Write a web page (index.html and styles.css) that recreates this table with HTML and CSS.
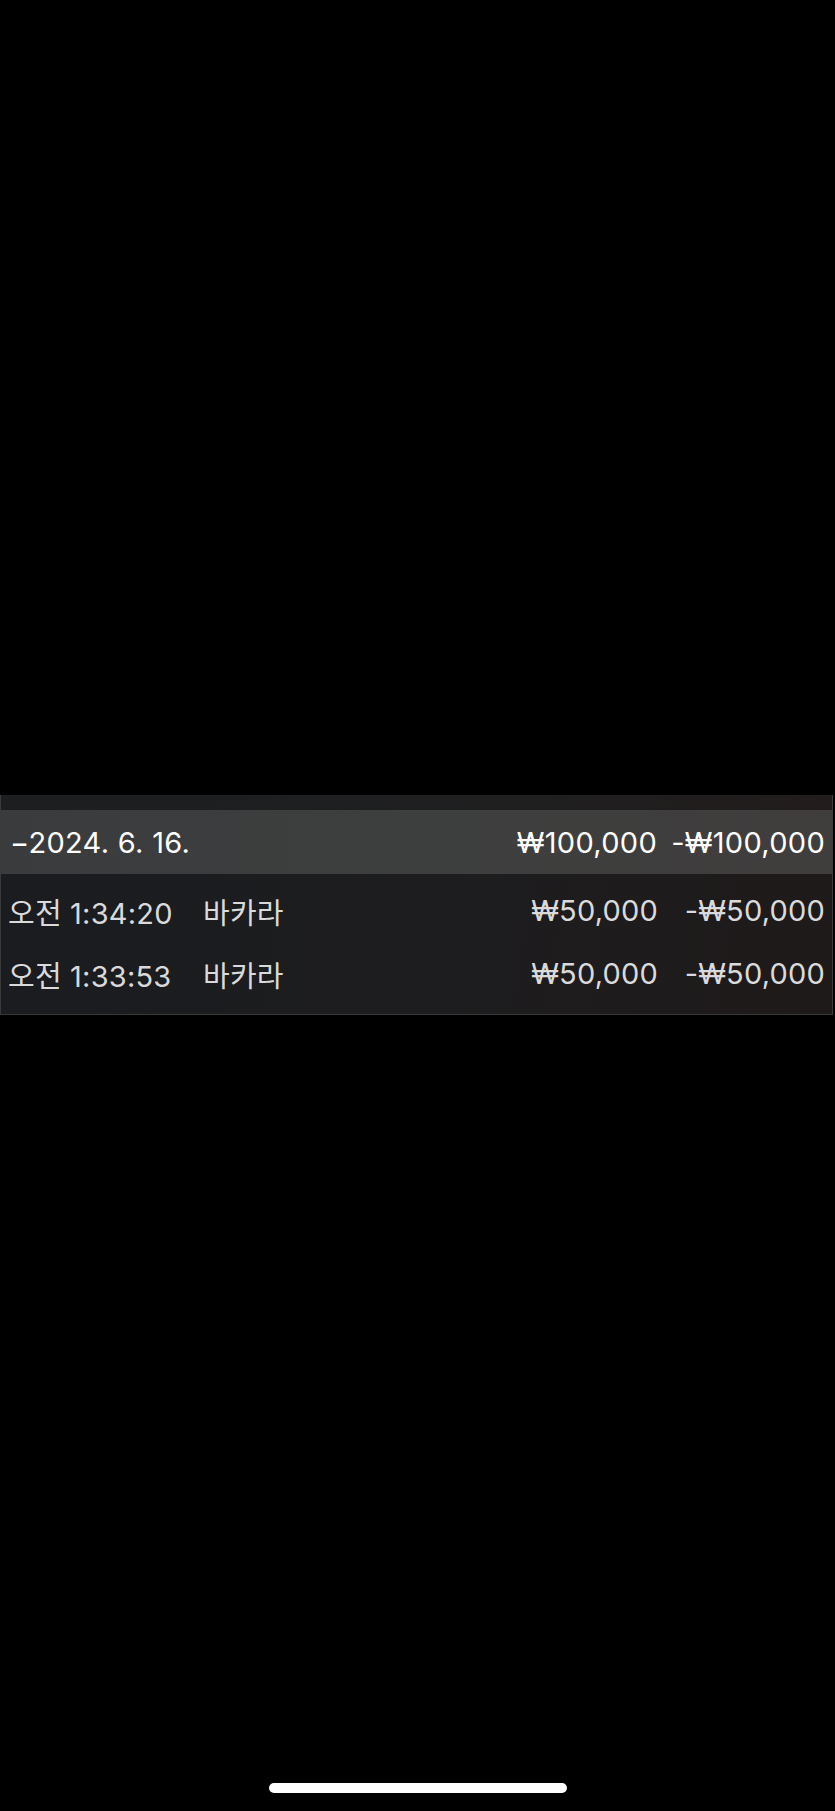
FILE: index.html
```html
<!DOCTYPE html>
<html lang="ko">
<head>
<meta charset="utf-8">
<link rel="stylesheet" href="styles.css">
</head>
<body>
<div class="screen">
  <div class="panel">
    <div class="strip"></div>
    <div class="header">
      <div class="date">−2024. 6. 16.</div>
      <div class="amt">₩100,000</div>
      <div class="total">-₩100,000</div>
    </div>
    <div class="rows">
      <div class="row">
        <div class="time">오전 1:34:20</div>
        <div class="name">바카라</div>
        <div class="amt">₩50,000</div>
        <div class="total">-₩50,000</div>
      </div>
      <div class="row">
        <div class="time">오전 1:33:53</div>
        <div class="name">바카라</div>
        <div class="amt">₩50,000</div>
        <div class="total">-₩50,000</div>
      </div>
    </div>
  </div>
  <div class="home"></div>
</div>
</body>
</html>
```

FILE: styles.css
```css
html, body {
  margin: 0;
  padding: 0;
  background: #000;
}
.screen {
  width: 835px;
  height: 1811px;
  display: flex;
  flex-direction: column;
  font-family: Inter, "Noto Sans CJK KR", sans-serif;
}
.panel {
  margin-top: 795px;
  width: 833px;
  border: 1px solid #3a3a3a;
  border-top: none;
  box-sizing: border-box;
  background: linear-gradient(100deg, #1a1c1f 0%, #1d1d1f 50%, #1f1a1a 100%);
}
.strip {
  height: 15px;
  background: linear-gradient(90deg, #1c1e20 0%, #1f1f20 60%, #221c1c 100%);
}
.header {
  height: 64px;
  display: grid;
  grid-template-columns: 1fr 158px 168px;
  align-items: center;
  padding: 0 7px 0 9px;
  background: linear-gradient(90deg, #3a3b3d 0%, #3d3f3e 50%, #403d3d 100%);
  color: #fff;
  font-size: 29px;
  letter-spacing: 0.3px;
}
.rows {
  padding: 5px 0 9px;
}
.row {
  height: 63px;
  display: grid;
  grid-template-columns: 195px 1fr 158px 167px;
  align-items: center;
  padding: 0 7px 0 7px;
  color: #dadada;
  font-size: 29px;
  letter-spacing: 0.2px;
}
.amt, .total {
  text-align: right;
  white-space: nowrap;
}
.home {
  margin-top: auto;
  margin-bottom: 18px;
  align-self: center;
  width: 298px;
  height: 10px;
  border-radius: 5px;
  background: #fff;
}
```
